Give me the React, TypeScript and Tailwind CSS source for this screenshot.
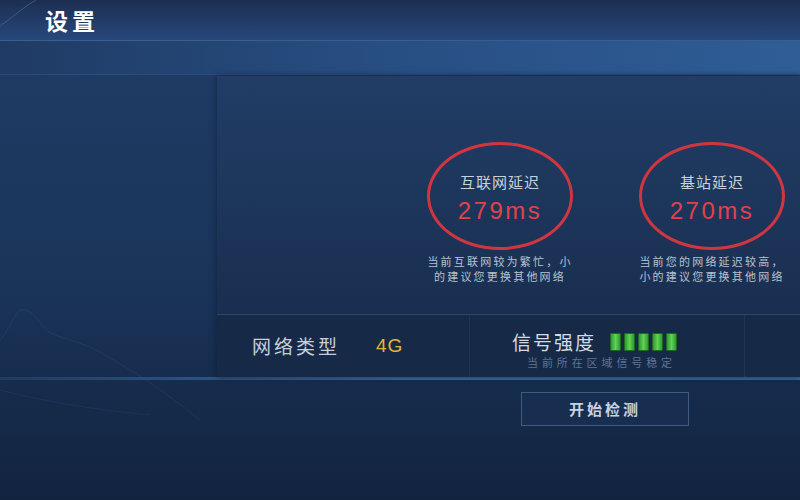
import React from 'react';

const cjk = { fontFamily: '"Noto Sans CJK SC", "Noto Sans", sans-serif' };
const latin = { fontFamily: '"Liberation Sans", Arial, sans-serif' };

// latency gauges shown in the upper half of the panel
const gauges = [
  { title: '互联网延迟', value: '279ms', tip: ['当前互联网较为繁忙，小', '的建议您更换其他网络'] },
  { title: '基站延迟', value: '270ms', tip: ['当前您的网络延迟较高，', '小的建议您更换其他网络'] },
];

function Gauge({ title, value, tip }: { title: string; value: string; tip: string[] }) {
  return (
    <div className="flex w-[150px] flex-col items-center">
      <div className="flex h-[108px] w-[146px] flex-col items-center justify-center rounded-[50%] border-[3px] border-[#d0363f]">
        <span className="mt-[4px] text-[15px] leading-none tracking-[1px] text-[#c9d1dc]">{title}</span>
        <span style={latin} className="mt-[10px] text-[24px] leading-none tracking-[2.5px] text-[#e0424a]">
          {value}
        </span>
      </div>
      <div className="mt-[4px] flex flex-col items-center text-[11px] leading-[15px] tracking-[2.2px] text-[#b8c2d0]">
        {tip.map((line) => (
          <span key={line} className="whitespace-nowrap">{line}</span>
        ))}
      </div>
    </div>
  );
}

function SignalBars() {
  return (
    <div className="flex gap-[3px]">
      {[0, 1, 2, 3, 4].map((i) => (
        <div
          key={i}
          className="h-[18px] w-[11px] rounded-[1px] border border-[#1d6b22] bg-gradient-to-r from-[#2f9a2f] via-[#5fd355] to-[#2f9a2f]"
        />
      ))}
    </div>
  );
}

export default function App() {
  return (
    <div style={cjk} className="relative flex h-[500px] w-[800px] flex-col overflow-hidden bg-[#1c365d]">
      {/* header */}
      <div className="relative flex h-[41px] shrink-0 items-center border-b border-[#3a5f8f] bg-gradient-to-b from-[#1c2f52] to-[#27487c] pl-[45px]">
        <svg className="absolute left-0 top-0" width="60" height="41" viewBox="0 0 60 41" fill="none">
          <path d="M0 26 C12 18 22 8 36 0" stroke="#5a7aa6" strokeOpacity="0.5" strokeWidth="1" />
        </svg>
        <span className="text-[23px] font-bold leading-none tracking-[4px] text-white">设置</span>
      </div>

      {/* light band under the header */}
      <div className="h-[34px] shrink-0 border-b border-[#2a4d7c] bg-gradient-to-r from-[#1f3b64] via-[#284f84] to-[#2f5d96]" />

      <div className="relative flex flex-1 flex-col bg-gradient-to-b from-[#1f3b64] via-[#1a3459] to-[#12233f]">
        {/* faint hills on the left */}
        <svg className="absolute left-0 top-[225px]" width="220" height="140" viewBox="0 0 220 140" fill="none">
          <path d="M0 40 C10 30 15 10 22 10 C35 8 40 30 55 35 C75 42 90 45 105 55 C130 70 150 80 200 120" stroke="#3a5a86" strokeOpacity="0.25" strokeWidth="1" />
          <path d="M0 90 C40 100 80 108 150 115" stroke="#2f5080" strokeOpacity="0.25" strokeWidth="1" />
        </svg>

        {/* panel */}
        <div className="relative ml-[217px] mt-[1px] flex h-[301px] flex-col bg-gradient-to-b from-[#213d66] to-[#172b4b] shadow-[0_0_6px_rgba(10,20,40,0.6)]">
          <div className="flex h-[238px] items-start gap-[62px] pl-[208px] pt-[66px]">
            {gauges.map((g) => (
              <Gauge key={g.title} {...g} />
            ))}
          </div>
          <div className="grid h-[63px] grid-cols-[253px_275px_1fr] border-t border-[#2b4569] bg-[#162a48]">
            <div className="flex items-center border-r border-[#203754] pl-[35px]">
              <span className="text-[19px] tracking-[3px] text-[#c6cfdb]">网络类型</span>
              <span style={latin} className="ml-[36px] text-[19px] tracking-[1px] text-[#e4b43a]">4G</span>
            </div>
            <div className="flex flex-col border-r border-[#203754] pl-[42px] pt-[17px]">
              <div className="flex items-center gap-[14px]">
                <span className="text-[19px] leading-none tracking-[2px] text-[#d4dbe5]">信号强度</span>
                <SignalBars />
              </div>
              <span className="ml-[15px] mt-[6px] text-[11px] leading-none tracking-[3.9px] text-[#5f7492]">当前所在区域信号稳定</span>
            </div>
            <div />
          </div>
        </div>

        {/* lit edge under panel */}
        <div className="h-[3px] bg-gradient-to-r from-[#1f3b64] via-[#3c6898] to-[#3a6696]" />

        <div className="flex pl-[521px] pt-[12px]">
          <button className="flex h-[34px] w-[168px] items-center justify-center border border-[#3e5b80] bg-[#172e51] text-[15px] font-bold tracking-[3px] text-[#c8d2e0]">
            开始检测
          </button>
        </div>
      </div>
    </div>
  );
}
